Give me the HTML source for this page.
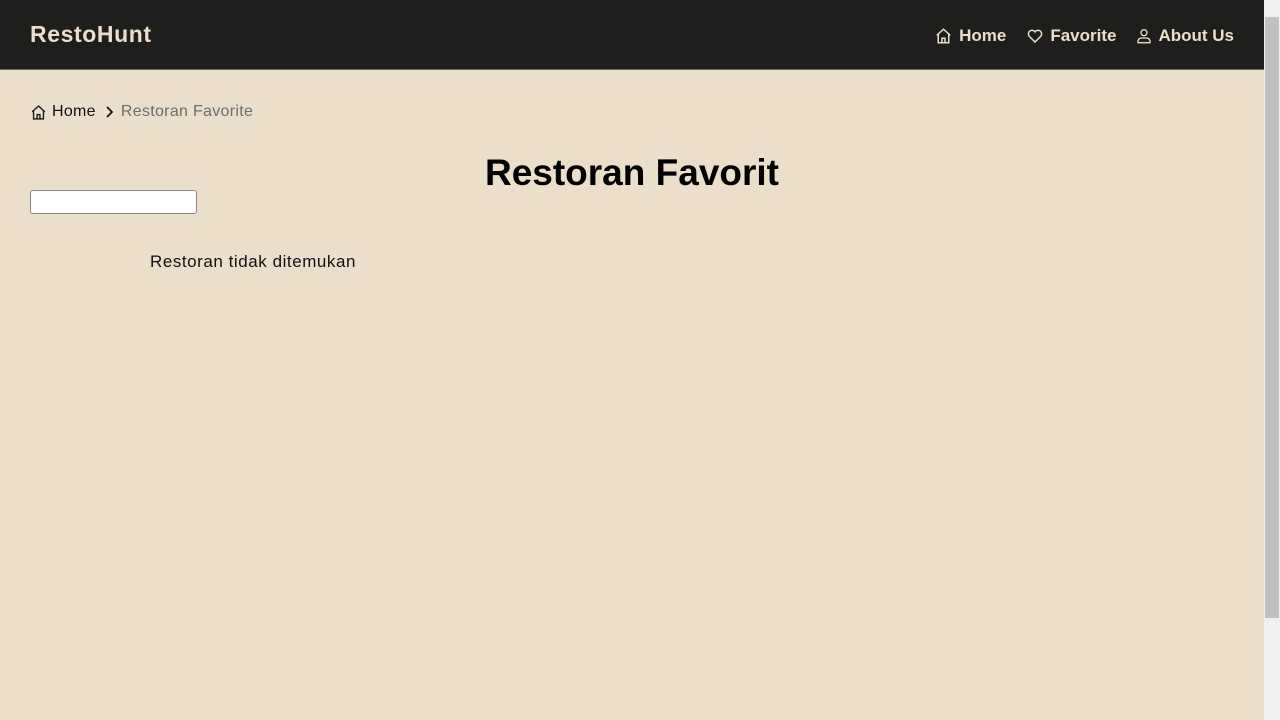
<!DOCTYPE html>
<html><head><meta charset="utf-8"><style>
*{box-sizing:border-box;margin:0;padding:0}
html,body{width:1280px;height:720px;overflow:hidden;background:#ebdecb;font-family:"Liberation Sans",sans-serif}
.nav{position:absolute;left:0;top:0;width:1264px;height:70px;background:#1e1f1d;border-bottom:1px solid #6b6658}
.logo{position:absolute;left:30px;top:21px;color:#ebdecb;font-weight:bold;font-size:23px;letter-spacing:0.6px}
.links{position:absolute;right:30px;top:26px;display:flex;gap:20px;color:#ebdecb;font-size:17px;font-weight:bold}
.links span{display:flex;align-items:center;gap:6px}
.crumb{position:absolute;left:30px;top:103px;display:flex;align-items:center;font-size:16px;color:#111;letter-spacing:0.3px}
h1{position:absolute;left:0;width:1264px;text-align:center;top:152px;font-size:37px;font-weight:bold;color:#000}
input{position:absolute;left:30px;top:190px;width:167px;height:24px;border:1px solid #888;border-radius:3px;background:#fff}
.empty{position:absolute;left:150px;top:252px;font-size:17px;color:#111;letter-spacing:0.55px}
.sb{position:absolute;left:1264px;top:0;width:16px;height:720px;background:#f0f0f0}
.th{position:absolute;left:1265px;top:17px;width:14px;height:601px;background:#c1c1c1}
</style></head><body>
<div class="nav"><div class="logo">RestoHunt</div>
<div class="links">
<span><svg width="19" height="18" viewBox="0 0 24 24" fill="none" stroke="#ebdecb" stroke-width="2"><path d="M3 11L12 3l9 8M5 9v12h14V9M10 21v-6h4v6"/></svg>Home</span>
<span><svg width="18" height="18" viewBox="0 0 24 24" fill="none" stroke="#ebdecb" stroke-width="2"><path d="M12 20L4 12a4.5 4.5 0 0 1 8-5.5A4.5 4.5 0 0 1 20 12z"/></svg>Favorite</span>
<span><svg width="16" height="18" viewBox="0 0 24 24" fill="none" stroke="#ebdecb" stroke-width="2"><circle cx="12" cy="7" r="4.5"/><path d="M3 22v-2a5 5 0 0 1 5-5h8a5 5 0 0 1 5 5v2z"/></svg>About Us</span>
</div></div>
<div class="crumb"><svg width="17" height="17" viewBox="0 0 24 24" fill="none" stroke="#222" stroke-width="2"><path d="M3 11L12 3l9 8M5 9v12h14V9M10 21v-6h4v6"/></svg><span style="margin-left:5px">Home</span><svg style="margin:0 8px 0 9px" width="8" height="12" viewBox="0 0 8 12" fill="none" stroke="#111" stroke-width="1.8"><path d="M2 1l5 5-5 5"/></svg><span style="color:#6b6e69">Restoran Favorite</span></div>
<h1>Restoran Favorit</h1>
<input type="text">
<div class="empty">Restoran tidak ditemukan</div>
<div class="sb"></div><div class="th"></div>
</body></html>
